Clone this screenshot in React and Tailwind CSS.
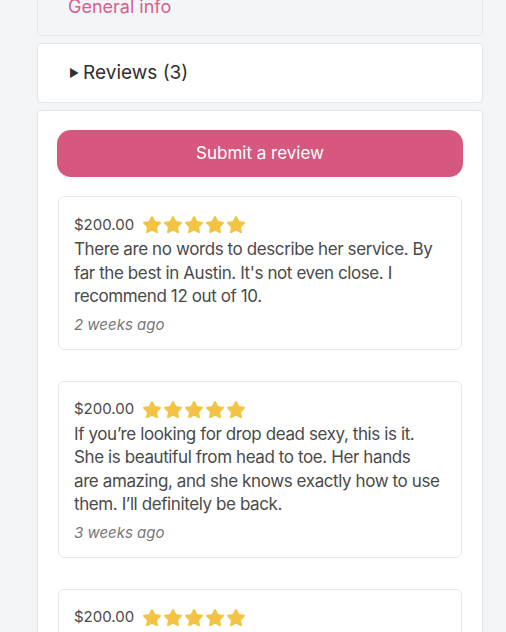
import { Star } from 'lucide-react';

const reviews = [
  {
    id: 1,
    price: '$200.00',
    text: "There are no words to describe her service. By far the best in Austin. It's not even close. I recommend 12 out of 10.",
    time: '2 weeks ago',
  },
  {
    id: 2,
    price: '$200.00',
    text: 'If you’re looking for drop dead sexy, this is it. She is beautiful from head to toe. Her hands are\u00a0amazing, and she knows exactly how to use them. I’ll definitely be back.',
    time: '3 weeks ago',
  },
  {
    id: 3,
    price: '$200.00',
    text: 'Amazing experience from start to finish. Highly recommended.',
    time: '1 month ago',
  },
];

function Stars() {
  return (
    <div className="flex items-center gap-px">
      {[0, 1, 2, 3, 4].map((i) => (
        <Star key={i} size={20} fill="#f3c343" stroke="#f3c343" strokeWidth={1.5} strokeLinejoin="round" />
      ))}
    </div>
  );
}

function ReviewCard({ review }) {
  return (
    <div className="mx-px bg-white border border-[#e9eaed] rounded-[6px] px-[15px] pt-[16px] pb-[12px]">
      <div className="flex items-center gap-[8px] h-[24px]">
        <span className="text-[15px] text-[#4a4a4a]">{review.price}</span>
        <Stars />
      </div>
      <p className="text-[17px] leading-[23.5px] tracking-[-0.4px] text-[#4a4a4a] mt-[1px]">{review.text}</p>
      <div className="text-[15px] italic text-[#777] mt-[4px] leading-[24px]">{review.time}</div>
    </div>
  );
}

export default function App() {
  return (
    <div
      className="min-h-[632px] bg-[#f4f5f7] pl-[37px] pr-[23px] overflow-hidden"
      style={{ fontFamily: 'Inter, "Noto Sans", sans-serif' }}
    >
      <div className="h-[36px] border border-t-0 border-[#e4e6ea] rounded-b-[5px] pl-[30px] overflow-hidden">
        <div className="text-[18px] leading-[24px] text-[#d4608f] -mt-[5px]">General info</div>
      </div>

      <div className="mt-[7px] h-[60px] bg-white border border-[#e4e6ea] rounded-[4px] flex items-center pl-[31px] text-[#2f2f2f]">
        <span className="text-[11px] mr-[4px]">▶</span>
        <span className="text-[19px]">Reviews (3)</span>
      </div>

      <div className="mt-[7px] bg-white border border-[#e4e6ea] rounded-t-[4px] px-[19px] pt-[19px] pb-[40px]">
        <button className="w-full h-[47px] rounded-[14px] bg-[#d6587f] text-white text-[17px]">
          Submit a review
        </button>
        <div className="mt-[19px] flex flex-col gap-[31px]">
          {reviews.map((r) => (
            <ReviewCard key={r.id} review={r} />
          ))}
        </div>
      </div>
    </div>
  );
}
